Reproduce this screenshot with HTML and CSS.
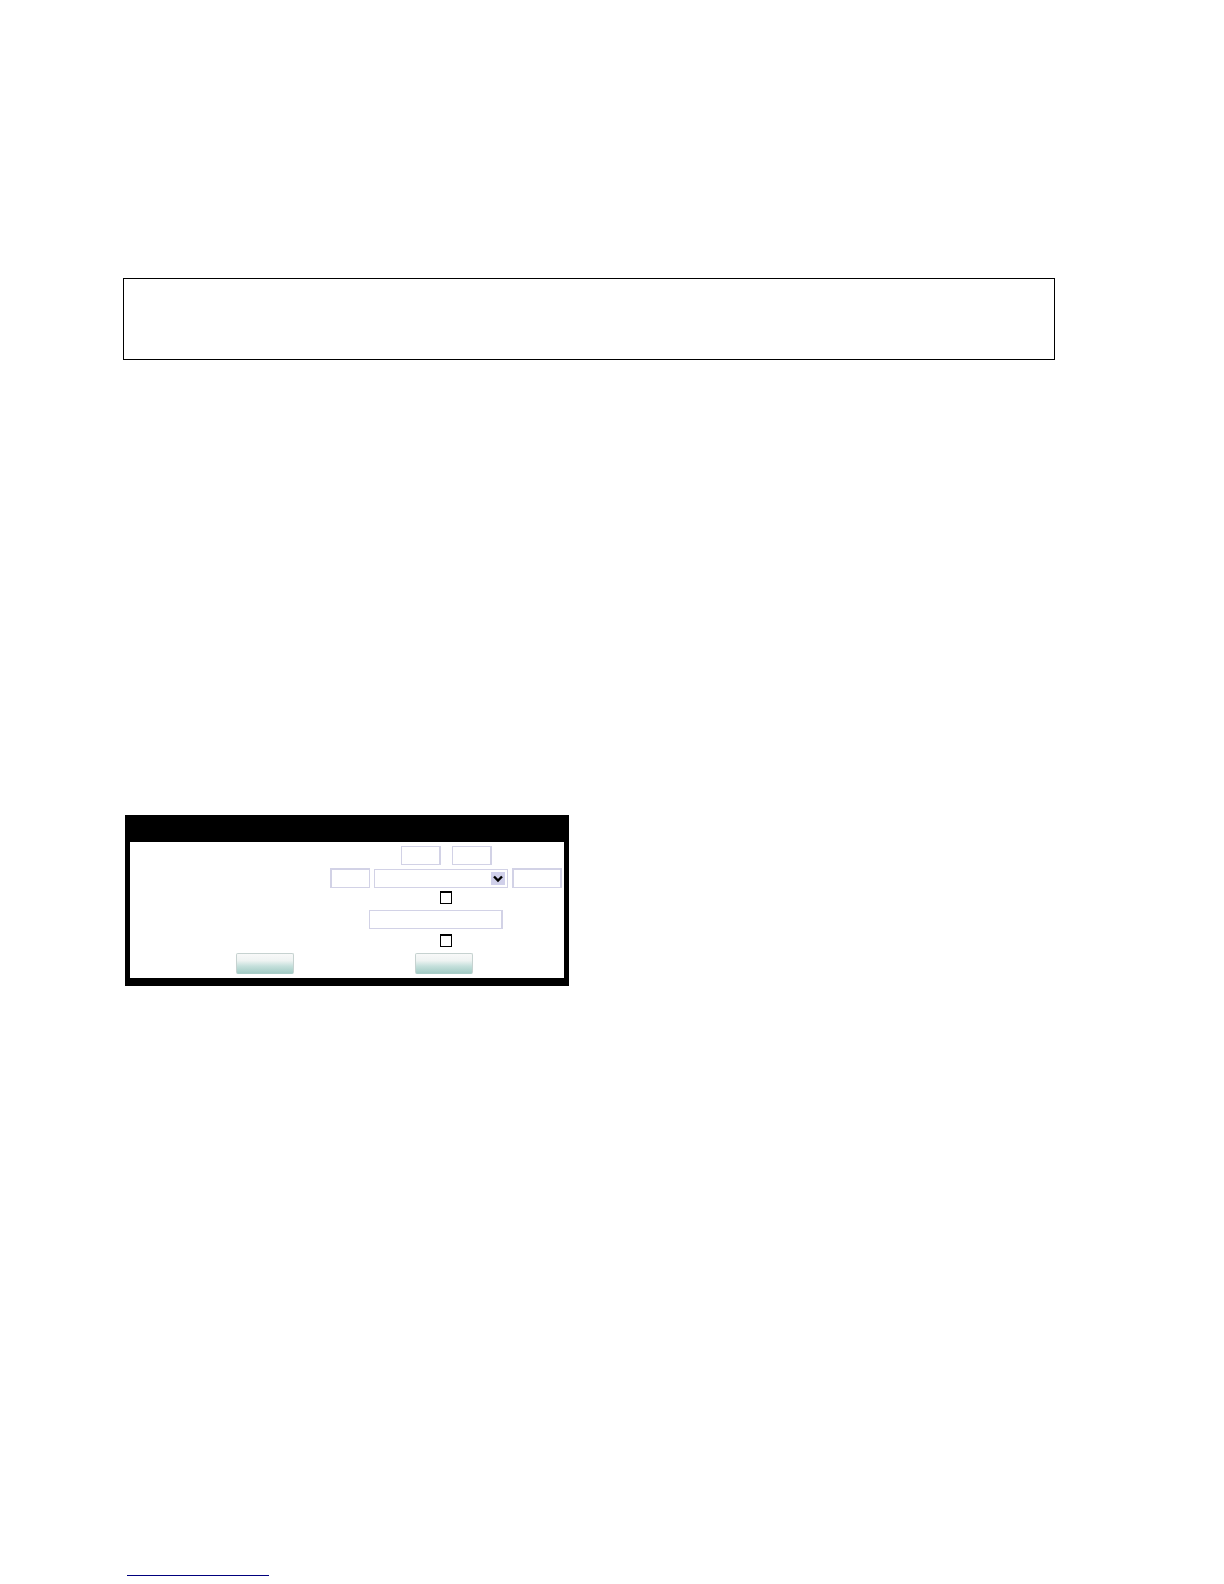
FILE: index.html
```html
<!DOCTYPE html>
<html lang="en">
<head>
    <meta charset="UTF-8">
    <meta name="viewport" content="width=device-width, initial-scale=1.0">
    <title>Date and time</title>
    <link rel="stylesheet" href="styles.css">
</head>
<body>
    <main>
        <div class="note"></div>

        <form class="panel">
            <!-- time -->
            <div class="row time">
                <input type="text" class="short" aria-label="Hours">
                <input type="text" class="short" aria-label="Minutes">
            </div>

            <!-- date -->
            <div class="row date">
                <input type="text" class="short" aria-label="Day">
                <div class="select">
                    <select aria-label="Month">
                        <option></option>
                    </select>
                    <svg viewBox="0 0 14 13" width="14" height="13" aria-hidden="true">
                        <rect width="14" height="13" fill="#d0d0ea"/>
                        <path d="M3 4.5L7 8.5L11 4.5" fill="none" stroke="#000" stroke-width="2.4"/>
                    </svg>
                </div>
                <input type="text" class="year" aria-label="Year">
            </div>

            <div class="row check">
                <input type="checkbox" aria-label="Daylight saving">
            </div>

            <div class="row server">
                <input type="text" aria-label="Time server">
            </div>

            <div class="row check">
                <input type="checkbox" aria-label="Automatic update">
            </div>

            <div class="buttons">
                <button type="submit" aria-label="Apply"></button>
                <button type="reset" aria-label="Cancel"></button>
            </div>
        </form>
    </main>

    <footer>
        <a href="#" aria-label="Contents"></a>
    </footer>
</body>
</html>
```

FILE: styles.css
```css
* {
    box-sizing: border-box;
}

body {
    font-family: "Liberation Sans", Arial, sans-serif;
    font-size: 12px;
    display: flex;
    flex-direction: column;
    min-height: 100vh;
    margin: 0;
    background: white;
}

main {
    padding: 278px 169px 0 123px;
}

.note {
    height: 82px;
    border: 1px solid black;
}

.panel {
    display: grid;
    grid-template-rows: 26px 20px 18px 26px 16px 30px;
    max-width: 444px;
    margin: 455px 0 0 2px;
    border: solid black;
    border-width: 27px 5px 8px;
    background: white;
}

.row {
    display: flex;
    justify-content: center;
    align-items: center;
    width: 236px;
    margin-left: auto;
}

.time {
    gap: 11px;
}

.date {
    gap: 4px;
}

.server {
    padding-right: 20px;
}

input,
select {
    margin: 0;
    padding: 0 4px;
    font: inherit;
    height: 19px;
    border: 1px solid #d2d2e6;
    border-right-width: 2px;
    border-radius: 0;
    background: white;
}

.date input {
    height: 20px;
    border-width: 2px 1px 1px 2px;
}

.short {
    width: 40px;
}

.date .year {
    width: 50px;
    border-right-width: 2px;
}

.server input {
    width: 134px;
}

.select {
    position: relative;
    width: 134px;
    height: 19px;
}

select {
    display: block;
    appearance: none;
    width: 100%;
    border-right-width: 1px;
}

/* arrow lies over the select */
.select svg {
    position: absolute;
    top: 3px;
    right: 3px;
    pointer-events: none;
}

.check input {
    appearance: none;
    width: 12px;
    height: 13px;
    padding: 0;
    border: 1px solid black;
    border-top-width: 2px;
}

.buttons {
    display: flex;
    align-items: center;
    gap: 121px;
    padding-left: 106px;
}

button {
    width: 58px;
    height: 21px;
    padding: 0;
    border: 1px solid #c6d2d0;
    border-bottom-color: #a9cdc8;
    border-radius: 2px;
    background: linear-gradient(#f8f9f9, #eef3f2 35%, #c4dfdb 65%, #a3cbc5);
    cursor: pointer;
}

footer {
    margin-top: auto;
    padding: 0 0 8px 127px;
}

footer a {
    display: block;
    width: 142px;
    height: 16px;
    border-bottom: 1px solid #00007d;
}
```
